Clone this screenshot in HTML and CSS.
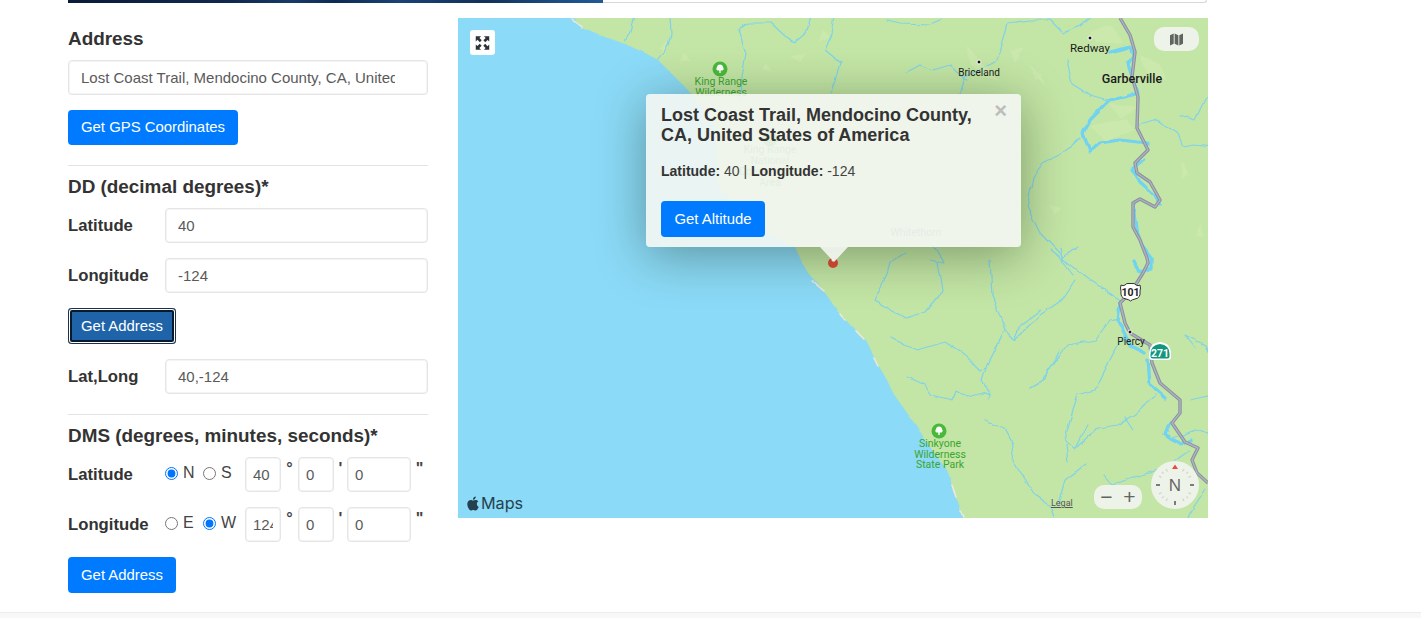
FILE: index.html
```html
<!DOCTYPE html>
<html lang="en">
<head>
<meta charset="utf-8">
<title>GPS Coordinates</title>
<link rel="stylesheet" href="styles.css">
</head>
<body>
<div class="banner"><div class="banner-image"></div></div>
<main class="layout">
  <form class="form-col">
    <h3 class="heading">Address</h3>
    <input class="field address-field" type="text" value="Lost Coast Trail, Mendocino County, CA, United States of America">
    <button class="btn" type="button">Get GPS Coordinates</button>
    <hr class="rule">
    <h3 class="heading">DD (decimal degrees)*</h3>
    <div class="row"><label class="row-label">Latitude</label><input class="field" type="text" value="40"></div>
    <div class="row"><label class="row-label">Longitude</label><input class="field" type="text" value="-124"></div>
    <button class="btn btn-focus" type="button">Get Address</button>
    <div class="row"><label class="row-label">Lat,Long</label><input class="field" type="text" value="40,-124"></div>
    <hr class="rule rule-after-row">
    <h3 class="heading">DMS (degrees, minutes, seconds)*</h3>
    <div class="row">
      <label class="row-label">Latitude</label>
      <div class="radios">
        <label class="radio"><input type="radio" name="ns" checked>N</label>
        <label class="radio"><input type="radio" name="ns">S</label>
      </div>
      <input class="field dms deg" type="text" value="40"><span class="unit">°</span>
      <input class="field dms min" type="text" value="0"><span class="unit">'</span>
      <input class="field dms sec" type="text" value="0"><span class="unit">"</span>
    </div>
    <div class="row">
      <label class="row-label">Longitude</label>
      <div class="radios">
        <label class="radio"><input type="radio" name="ew">E</label>
        <label class="radio"><input type="radio" name="ew" checked>W</label>
      </div>
      <input class="field dms deg" type="text" value="124"><span class="unit">°</span>
      <input class="field dms min" type="text" value="0"><span class="unit">'</span>
      <input class="field dms sec" type="text" value="0"><span class="unit">"</span>
    </div>
    <button class="btn btn-last" type="button">Get Address</button>
  </form>

  <section class="map">
    <svg class="map-art" viewBox="458 18 750 500" aria-hidden="true">
      <defs>
        <filter id="wiggle" x="-5%" y="-5%" width="110%" height="110%">
          <feTurbulence type="fractalNoise" baseFrequency="0.07" numOctaves="2" seed="4"/>
          <feDisplacementMap in="SourceGraphic" scale="5" xChannelSelector="R" yChannelSelector="G"/>
          <feGaussianBlur stdDeviation="0.25"/>
        </filter>
        <filter id="coast" x="-2%" y="-2%" width="104%" height="104%">
          <feTurbulence type="fractalNoise" baseFrequency="0.09" numOctaves="2" seed="9"/>
          <feDisplacementMap in="SourceGraphic" scale="2.500" xChannelSelector="R" yChannelSelector="G"/>
          <feGaussianBlur stdDeviation="0.3"/>
        </filter>
      </defs>
      <rect class="sea" x="458" y="18" width="750" height="500"/>
      <path class="land" filter="url(#coast)" d="M570 14 L582 27 L600 35 L625 44 L645 53 L658 60 L672 74 L688 90 L705 112 L717 130 L717 185 L745 215 L767 233 L795 247 L802 262 L808 273 L818 284 L828 297 L838 312 L855 330 L866 340 L877 363 L887 380 L893 393 L905 410 L917 427 L932 450 L947 470 L955 495 L965 522 L1212 522 L1212 14 Z"/>
      <path class="beach" filter="url(#coast)" d="M572 19 L582 27 M812 281 L824 291 M840 314 L845 320 M856 331 L864 339 M874 358 L878 366 M952 485 L956 497 M961 511 L964 517"/>
      <g class="patch" filter="url(#wiggle)">
        <path d="M660 48 L668 40 L664 58Z M684 52 L690 60 L680 62Z M766 62 L772 72 L762 68Z M790 58 L806 52 L800 62Z M822 30 L830 38 L818 42Z"/>
        <path d="M965 45 L980 60 L1000 82 L985 78 L970 62Z M1030 65 L1042 75 L1045 85 L1035 78Z M1010 52 L1025 48 L1015 62Z"/>
        <path d="M1090 30 L1112 26 L1124 45 L1110 42 L1095 42Z M1140 55 L1160 65 L1168 80 L1148 75Z M1110 104 L1140 108 L1120 118Z M1090 126 L1125 118 L1135 130 L1105 140Z M1180 160 L1190 175 L1182 178Z M1200 225 L1205 238 L1195 235Z M1050 205 L1062 208 L1054 214Z"/>
      </g>
      <g class="river thin" filter="url(#wiggle)">
        <polyline points="625,40 630,32 633,20 636,16"/>
        <polyline points="658,60 668,46 671,33 670,16"/>
        <polyline points="738,30 748,23 771,23 785,36 795,42 806,33 811,16"/>
        <polyline points="738,30 746,53 742,78 741,100"/>
        <polyline points="835,16 832,34 825,50 841,63 836,80 831,93"/>
        <polyline points="887,20 900,23 930,24 950,16"/>
        <polyline points="907,72 920,65 933,70 950,65 960,76 967,80"/>
        <polyline points="960,93 965,77 985,66 997,60 1003,38 1007,23 1030,20 1050,20 1063,33 1080,26 1093,16"/>
        <polyline points="1067,60 1072,84 1090,95 1108,100"/>
        <polyline points="1080,138 1063,153 1043,163 1033,177 1027,207 1040,233 1063,257 1078,247"/>
        <polyline points="1073,275 1063,262 1060,248"/>
        <polyline points="905,253 890,262 887,275 874,300 905,318 925,312 943,290 938,262"/>
        <polyline points="933,245 944,262 930,260"/>
        <polyline points="990,260 992,295 1005,330 1014,340 1040,315 1062,300 1075,280"/>
        <polyline points="1014,340 1020,325 1040,310"/>
        <polyline points="890,337 905,345 918,350 945,342 965,355 980,370 986,368 1005,330"/>
        <polyline points="986,368 982,380 990,395"/>
        <polyline points="908,377 925,385 932,395 952,400 955,390 968,397 985,392 990,395 989,400"/>
        <polyline points="985,420 1005,428 1014,445 1012,460 1025,480 1035,495 1050,505 1055,522"/>
        <polyline points="1030,387 1042,380 1050,368 1068,345 1095,340 1110,320 1118,318"/>
        <polyline points="1030,387 1045,378 1060,350"/>
        <polyline points="1088,425 1075,450 1065,440 1070,420 1078,395 1095,390 1115,350 1125,335"/>
        <polyline points="1066,445 1068,462"/>
        <polyline points="1078,447 1098,428 1118,425 1135,415 1155,395"/>
        <polyline points="1125,418 1133,430"/>
        <polyline points="1104,475 1112,485 1132,478 1165,468 1190,450"/>
        <polyline points="1058,505 1065,480 1086,464"/>
        <polyline points="1185,522 1195,505 1205,490"/>
        <polyline points="1195,348 1185,335 1205,345 1212,360"/>
        <polyline points="1190,400 1212,395"/>
        <polyline points="1170,440 1195,430 1212,435"/>
        <polyline points="1212,85 1195,120 1180,115"/>
        <polyline points="1140,125 1157,120 1177,133 1183,147 1195,145 1212,147"/>
        <polyline points="1050,250 1070,265 1090,280 1120,300 1125,320"/>
      </g>
      <g class="river thick" filter="url(#wiggle)">
        <polyline points="1110,52 1130,47 1133,56 1128,64 1133,80 1137,93 1125,97 1110,100 1090,120 1083,133 1090,152 1100,143 1120,140 1147,143"/>
        <polyline points="1145,160 1133,170 1140,182 1155,195 1160,205"/>
        <polyline points="1133,203 1136,230 1142,245 1152,258 1152,268 1140,272 1135,262"/>
        <polyline points="1120,305 1118,320 1130,345 1145,352"/>
        <polyline points="1148,360 1150,385 1165,398"/>
        <polyline points="1170,422 1165,435 1180,445 1192,440"/>
      </g>
      <polyline class="road-edge" points="1120,18 1130,35 1135,52 1132,77 1138,97 1137,128 1148,150 1135,163 1137,173 1150,182 1160,200 1155,207 1140,199 1133,203 1133,227 1140,240 1147,258 1148,263 1143,273 1131,292 1120,303 1125,323 1130,333 1150,345 1152,363 1160,383 1180,400 1180,413 1172,423 1185,442 1198,448 1192,460 1197,473 1208,483"/>
      <polyline class="road" points="1120,18 1130,35 1135,52 1132,77 1138,97 1137,128 1148,150 1135,163 1137,173 1150,182 1160,200 1155,207 1140,199 1133,203 1133,227 1140,240 1147,258 1148,263 1143,273 1131,292 1120,303 1125,323 1130,333 1150,345 1152,363 1160,383 1180,400 1180,413 1172,423 1185,442 1198,448 1192,460 1197,473 1208,483"/>

      <circle class="town" cx="1090" cy="38" r="2"/>
      <circle class="town" cx="979" cy="62" r="2"/>
      <circle class="town" cx="1130" cy="332" r="2"/>
      <text class="label size-l" x="1090" y="52" text-anchor="middle">Redway</text>
      <text class="label size-s" x="979" y="76" text-anchor="middle">Briceland</text>
      <text class="label strong" x="1132" y="83" text-anchor="middle">Garberville</text>
      <text class="label size-s" x="1131" y="345" text-anchor="middle">Piercy</text>
      <text class="label faint" x="916" y="236" text-anchor="middle">Whitethorn</text>

      <g class="park">
        <circle cx="720" cy="69" r="7.500"/>
        <path class="tree" d="M720 64.500a3 3 0 0 1 3 2.700 2 2 0 0 1 -.5 3.300h-1.800v2.500h-1.400v-2.500h-1.800a2 2 0 0 1 -.5 -3.300 3 3 0 0 1 3 -2.700z"/>
        <text class="park-label" x="721" y="85" text-anchor="middle">King Range</text>
        <text class="park-label" x="721" y="96" text-anchor="middle">Wilderness</text>
      </g>
      <g class="park">
        <circle cx="939" cy="431" r="7.500"/>
        <path class="tree" d="M939 426.500a3 3 0 0 1 3 2.700 2 2 0 0 1 -.5 3.300h-1.800v2.500h-1.400v-2.500h-1.800a2 2 0 0 1 -.5 -3.300 3 3 0 0 1 3 -2.700z"/>
        <text class="park-label" x="940" y="447" text-anchor="middle">Sinkyone</text>
        <text class="park-label" x="940" y="458" text-anchor="middle">Wilderness</text>
        <text class="park-label" x="940" y="468" text-anchor="middle">State Park</text>
      </g>
      <g class="park">
        <circle cx="770" cy="139" r="7.500"/>
        <text class="park-label" x="770" y="153" text-anchor="middle">King Range</text>
        <text class="park-label" x="770" y="164" text-anchor="middle">National</text>
        <text class="park-label" x="770" y="174.500" text-anchor="middle">Conservation</text>
        <text class="park-label" x="770" y="185.500" text-anchor="middle">Area</text>
      </g>

      <g class="shield">
        <path class="shield-us" d="M1121 285 q2 1.500 4 0 q2 -2 3 -1.500 h5 q1 -.5 3 1.500 q2 1.500 4 0 q1 3 0 6 q1 7 -5 8 q-3 .5 -4.500 2 q-1.500 -1.500 -4.500 -2 q-6 -1 -5 -8 q-1 -3 0 -6z"/>
        <text class="shield-text" x="1130.500" y="296" text-anchor="middle">101</text>
      </g>
      <g class="shield">
        <path class="shield-ca" d="M1149 354 q0 -11 11 -12 q11 1 11 12 l0 3 q0 3 -3 3 h-16 q-3 0 -3 -3z"/>
        <path class="shield-ca-in" d="M1150.500 354 q0 -9 9.500 -10 q9.500 1 9.500 10 l0 2.500 q0 2 -2 2 h-15 q-2 0 -2 -2z"/>
        <text class="shield-text on-green" x="1160" y="356.500" text-anchor="middle">271</text>
      </g>
      <circle class="pin" cx="833" cy="263" r="5"/>
      <circle class="pin-dot" cx="833" cy="260" r="1.500"/>
    </svg>

    <button class="expand" type="button" aria-label="Full screen">
      <svg viewBox="0 0 26 26" width="26" height="26"><path class="expand-icon" d="M6 6h5.500l-1.700 1.700 2.400 2.400-2 2-2.400-2.400L6 11.500zM20 6v5.500l-1.700-1.700-2.400 2.400-2-2 2.400-2.400L14.500 6zM6 20v-5.500l1.700 1.700 2.400-2.400 2 2-2.400 2.400 1.800 1.800zM20 20h-5.500l1.700-1.700-2.400-2.400 2-2 2.400 2.400 1.800-1.800z"/></svg>
    </button>
    <div class="map-type">
      <svg viewBox="0 0 16 14" width="15" height="13"><path class="ctrl-icon" d="M1 2.500 L5 .5 V11.500 L1 13.500Z M6 .5 L10 2.500 V13.500 L6 11.500Z M11 2.500 L15 .5 V11.500 L11 13.500Z"/></svg>
    </div>

    <div class="popup">
      <button class="popup-close" type="button" aria-label="Close">×</button>
      <h4 class="popup-title">Lost Coast Trail, Mendocino County, CA, United States of America</h4>
      <p class="popup-coords"><b>Latitude:</b> 40 | <b>Longitude:</b> -124</p>
      <button class="btn popup-btn" type="button">Get Altitude</button>
    </div>

    <div class="brand">
      <svg viewBox="0 0 24 24" width="14" height="15"><path class="brand-icon" d="M12.152 6.896c-.948 0-2.415-1.078-3.960-1.040-2.040.027-3.910 1.183-4.961 3.014-2.117 3.675-.546 9.103 1.519 12.090 1.013 1.454 2.208 3.090 3.792 3.039 1.520-.065 2.090-.987 3.935-.987 1.831 0 2.350.987 3.960.948 1.637-.026 2.676-1.480 3.676-2.948 1.156-1.688 1.636-3.325 1.662-3.415-.039-.013-3.182-1.221-3.220-4.857-.026-3.040 2.480-4.494 2.597-4.559-1.429-2.090-3.623-2.324-4.390-2.376-2-.156-3.675 1.090-4.610 1.090zM15.530 3.830c.843-1.012 1.400-2.427 1.245-3.830-1.207.052-2.662.805-3.532 1.818-.780.896-1.454 2.338-1.273 3.714 1.338.104 2.715-.688 3.559-1.701"/></svg>
      <span>Maps</span>
    </div>
    <span class="legal">Legal</span>
    <div class="zoom-ctrl"><span class="zoom-btn">−</span><span class="zoom-btn">+</span></div>
    <div class="compass">
      <svg viewBox="0 0 48 48" width="48" height="48">
        <circle class="compass-face" cx="24" cy="24" r="24"/>
        <path class="compass-n" d="M24 3.500 L27 8 H21Z"/>
        <g class="ticks">
          <path d="M33 8 l-1.500 2.500 M40 15 l-2.500 1.500 M40 33 l-2.500 -1.500 M33 40 l-1.500 -2.500 M15 40 l1.500 -2.500 M8 33 l2.500 -1.500 M8 15 l2.500 1.500 M15 8 l1.500 2.500"/>
          <path d="M37 11 l-1.500 1.500 M37 37 l-1.500 -1.500 M11 37 l1.500 -1.500 M11 11 l1.500 1.500"/>
        </g>
        <path class="ticks-strong" d="M5 24 h4 M39 24 h4 M24 40 v4"/>
        <text class="compass-letter" x="24" y="30" text-anchor="middle">N</text>
      </svg>
    </div>
  </section>
</main>
<footer class="page-foot"></footer>
</body>
</html>
```
FILE: styles.css
```css
* { box-sizing: border-box; }
html, body { margin: 0; height: 618px; overflow: hidden; background: #fff; }
body {
  font-family: "Liberation Sans", Arial, sans-serif;
  color: #333;
  display: flex;
  flex-direction: column;
}

.banner {
  height: 3px;
  margin-left: 68px;
  width: 1139px;
  border-bottom: 1px solid #d8d8dc;
  border-bottom-right-radius: 4px;
  border-right: 1px solid #d8d8dc;
  flex: none;
}
.banner-image {
  width: 535px;
  height: 3px;
  background: linear-gradient(90deg, #0a1a38 0%, #0d2448 18%, #10284e 30%, #173a68 42%, #0f2a52 50%, #1a4275 62%, #123058 78%, #1b4a80 90%, #215a94 100%);
}

.layout {
  flex: none;
  display: flex;
  gap: 30px;
  padding: 15px 0 0 68px;
  height: 609px;
}

.form-col { width: 360px; flex: none; padding-top: 10px; display: flex; flex-direction: column; align-items: flex-start; }
.heading { margin: 0 0 10px; font-size: 18.900px; line-height: 21px; padding-bottom: 1px; font-weight: 700; color: #333; white-space: nowrap; }

.field {
  height: 35px;
  width: 100%;
  min-width: 0;
  flex: 1 1 auto;
  padding: 0 12px;
  border: 1px solid #e5e5e5;
  box-shadow: inset 0 0 0 1px #f4f4f4;
  border-radius: 4px;
  font: 15px "Liberation Sans", Arial, sans-serif;
  color: #5a5a5a;
  background: #fff;
  outline: none;
}
.address-field { flex: none; padding-right: 32px; margin-bottom: 15px; }

.btn {
  height: 35px;
  padding: 0 13px 1px;
  border: 0;
  border-radius: 4px;
  background: #007bff;
  color: #fff;
  font: 14.900px "Liberation Sans", Arial, sans-serif;
  white-space: nowrap;
  flex: none;
}
.btn-focus {
  height: 36px;
  width: 108px;
  margin-bottom: 15px;
  background: #1f63a8;
  box-shadow: inset 0 0 0 1px #17324f, inset 0 0 0 2px #fff, inset 0 0 0 4px #0a1a2c;
}
.btn-last { height: 36px; width: 108px; }

.rule { width: 100%; margin: 20px 0 10px; border: 0; border-top: 1px solid #e3e3e3; height: 1px; flex: none; }
.rule-after-row { margin-top: 5px; }

.row { display: flex; align-items: center; width: 100%; height: 35px; margin-bottom: 15px; flex: none; }
.row-label { width: 97px; flex: none; padding-top: 1px; font-size: 16.700px; font-weight: 700; color: #333; }

.radios { width: 80px; flex: none; display: flex; margin-top: -3px; }
.radio { display: flex; align-items: center; font-size: 16px; color: #444; width: 38px; flex: none; }
.radio input { margin: 0 5px 0 0; width: 13px; height: 13px; accent-color: #0075ff; flex: none; }

.dms { flex: none; padding: 0 7px; }
.deg { width: 36px; }
.min { width: 36px; }
.sec { width: 64px; }
.unit { flex: none; text-align: center; font-size: 16px; font-weight: 700; color: #444; height: 29px; line-height: 18px; width: 17px; }
.min + .unit { width: 13px; }

.map { position: relative; width: 750px; height: 500px; flex: none; overflow: hidden; }
.map-art { display: block; width: 750px; height: 500px; }
.sea { fill: #8bdaf7; }
.land { fill: #c3e5a5; }
.beach { fill: none; stroke: #efe9d6; stroke-width: 1.600; stroke-linecap: round; }
.patch { fill: #cbe9ad; }
.river { fill: none; stroke: #7fd3ea; stroke-linejoin: round; stroke-linecap: round; }
.thin { stroke-width: 1.200; }
.thick { stroke-width: 3.200; stroke: #6fd3f2; }
.road-edge { fill: none; stroke: #8a90a0; stroke-width: 3.400; stroke-linejoin: round; }
.road { fill: none; stroke: #aeb3c0; stroke-width: 1.400; stroke-linejoin: round; }
.town { fill: #111; stroke: #fff; stroke-width: 1; }
.label { font-family: Roboto, "Liberation Sans", sans-serif; fill: #1b1b1b; }
.size-l { font-size: 11.500px; }
.size-s { font-size: 10px; }
.strong { font-size: 12.500px; font-weight: 500; }
.faint { font-size: 10.500px; fill: #777; }
.park circle { fill: #4bb83c; }
.tree { fill: #fff; }
.park-label { font: 10.500px Roboto, "Liberation Sans", sans-serif; fill: #3ba52f; }
.shield-us { fill: #fff; stroke: #333; stroke-width: 1; }
.shield-ca { fill: #fff; }
.shield-ca-in { fill: #12977e; }
.shield-text { font: 700 10.500px Roboto, "Liberation Sans", sans-serif; fill: #222; }
.on-green { fill: #fff; }
.pin { fill: #e04a33; }
.pin-dot { fill: #fff; }

.expand {
  position: absolute;
  left: 12px;
  top: 12px;
  width: 25px;
  height: 25px;
  padding: 0;
  border: 0;
  border-radius: 3px;
  background: #fff;
  display: flex;
  align-items: center;
  justify-content: center;
}
.expand-icon { fill: #2c3338; }

.map-type {
  position: absolute;
  left: 696px;
  top: 9px;
  width: 45px;
  height: 24px;
  border-radius: 10px;
  background: #eef3ea;
  display: flex;
  align-items: center;
  justify-content: center;
}
.ctrl-icon { fill: #5f6660; }

.popup {
  position: absolute;
  left: 188px;
  top: 76px;
  width: 375px;
  height: 153px;
  padding: 11px 15px 0;
  border-radius: 4px;
  background: rgba(244, 246, 242, .9);
  box-shadow: 0 8px 50px rgba(20, 40, 20, .4);
}
.popup::after {
  content: "";
  position: absolute;
  left: 174px;
  top: 153px;
  border-left: 14px solid transparent;
  border-right: 14px solid transparent;
  border-top: 15px solid rgba(244, 246, 242, .9);
}
.popup-title { margin: 0; width: 325px; font-size: 18px; line-height: 20px; font-weight: 700; color: #333; }
.popup-coords { margin: 16px 0 0; font-size: 14px; line-height: 20px; color: #444; }
.popup-coords b { color: #333; }
.popup-btn { display: block; margin-top: 20px; height: 36px; width: 104px; }
.popup-close {
  position: absolute;
  right: 14px;
  top: 6px;
  padding: 0;
  border: 0;
  background: none;
  font: 700 22px/22px "Liberation Sans", Arial, sans-serif;
  color: #bdbdbd;
}

.brand { position: absolute; left: 8px; bottom: 5px; display: flex; align-items: center; gap: 1px; font: 16.200px Inter, "Liberation Sans", sans-serif; color: #254150; }
.brand-icon { fill: #254150; }

.legal { position: absolute; left: 593px; top: 480px; font: 9px Roboto, "Liberation Sans", sans-serif; color: #555; text-decoration: underline; }

.zoom-ctrl {
  position: absolute;
  left: 636px;
  top: 467px;
  width: 48px;
  height: 24px;
  border-radius: 10px;
  background: #eef3ea;
  display: flex;
  align-items: center;
  justify-content: space-around;
  padding: 0 1px;
}
.zoom-btn { font: 300 21px/24px "Liberation Sans", sans-serif; color: #5f6660; }

.compass { position: absolute; left: 693px; top: 443px; width: 48px; height: 48px; }
.compass-face { fill: #eef3ea; }
.compass-n { fill: #ec4a3d; }
.ticks { fill: none; stroke: #cfd3cb; stroke-width: 1.200; }
.ticks-strong { fill: none; stroke: #555; stroke-width: 1.500; }
.compass-letter { font: 300 17px "Liberation Sans", sans-serif; fill: #666; }

.page-foot { flex: 1 1 auto; background: #f8f8f8; border-top: 1px solid #ececec; }
```
